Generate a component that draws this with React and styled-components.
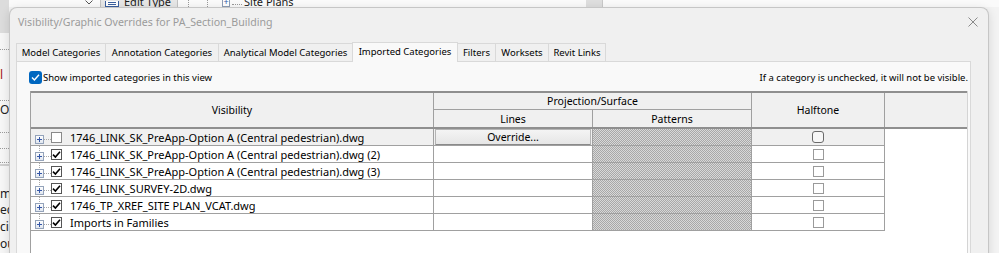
import React from "react";
import styled, { createGlobalStyle } from "styled-components";

const GlobalStyle = createGlobalStyle`
  html, body {
    margin: 0;
    padding: 0;
  }
  body {
    background: #f3f3f3;
    font-family: "Segoe UI", "Noto Sans", "Open Sans", sans-serif;
    color: #000;
  }
`;

const tabs = [
  { label: "Model Categories", width: 90 },
  { label: "Annotation Categories", width: 114 },
  { label: "Analytical Model Categories", width: 135 },
  { label: "Imported Categories", width: 106, active: true },
  { label: "Filters", width: 39 },
  { label: "Worksets", width: 54 },
  { label: "Revit Links", width: 58 },
];

const rows = [
  { name: "1746_LINK_SK_PreApp-Option A (Central pedestrian).dwg", checked: false, current: true },
  { name: "1746_LINK_SK_PreApp-Option A (Central pedestrian).dwg (2)", checked: true },
  { name: "1746_LINK_SK_PreApp-Option A (Central pedestrian).dwg (3)", checked: true },
  { name: "1746_LINK_SURVEY-2D.dwg", checked: true },
  { name: "1746_TP_XREF_SITE PLAN_VCAT.dwg", checked: true },
  { name: "Imports in Families", checked: true },
];

// bits of the Revit window peeking out on the left
const sideItems = [
  { h: 26, grey: true },
  { h: 17, dotted: true },
  { h: 16 },
  { h: 17, text: "l", red: true },
  { h: 18, dotted: true },
  { h: 17, text: "Or" },
  { h: 15, dotted: true },
  { h: 16, dotted: true },
  { h: 14, dotted: true },
  { h: 3, solid: true },
  { h: 19 },
  { h: 17, text: "m" },
  { h: 16, text: "ec" },
  { h: 17, text: "cip" },
  { h: 17, text: "ou" },
];

const Check = ({ color = "#000", width = 1.6 }) => (
  <svg width="11" height="11" viewBox="0 0 11 11">
    <path d="M2 5.6 L4.4 8 L9 2.8" fill="none" stroke={color} strokeWidth={width} />
  </svg>
);

const Expander = ({ first, last }) => (
  <svg width="20" height="16" viewBox="0 0 20 16">
    <defs>
      <linearGradient id="expGrad" x1="0" y1="0" x2="0" y2="1">
        <stop offset="0" stopColor="#ffffff" />
        <stop offset="1" stopColor="#dfe5ee" />
      </linearGradient>
    </defs>
    <line x1="8.5" y1={first ? 10 : 0} x2="8.5" y2={last ? 10 : 16} stroke="#a8a8a8" strokeDasharray="1 1" />
    <line x1="13" y1="10.5" x2="20" y2="10.5" stroke="#a8a8a8" strokeDasharray="1 1" />
    <rect x="4.5" y="6.5" width="8" height="8" fill="url(#expGrad)" stroke="#94a3ba" />
    <path d="M6 10.5h5M8.5 8v5" stroke="#3557a8" />
  </svg>
);

const App = () => (
  <>
    <GlobalStyle />
    <Desktop>
      <Backdrop>
        <TopStrip>
          <StripCorner />
          <Chevron>
            <svg width="8" height="5" viewBox="0 0 8 5">
              <path d="M0.5 0.5 L4 4 L7.5 0.5" fill="none" stroke="#555" />
            </svg>
          </Chevron>
          <EditType>
            <svg width="14" height="6" viewBox="0 0 14 6">
              <rect x="0.5" y="-4.5" width="13" height="10" fill="#fff" stroke="#3b5f9e" />
              <path d="M3 1.5h8M3 3.5h8" stroke="#3b5f9e" />
            </svg>
            <span>Edit Type</span>
          </EditType>
          <DotSep $gap={10} />
          <DotSep $gap={18} />
          <TreeNode>
            <PlusBox>+</PlusBox>
            <TreeDots />
            <span>Site Plans</span>
          </TreeNode>
          <ScrollThumb />
        </TopStrip>
        <SideStrip>
          {sideItems.map((it, i) => (
            <SideItem key={i} $h={it.h} $grey={it.grey} $dotted={it.dotted} $solid={it.solid} $red={it.red}>
              {it.text}
            </SideItem>
          ))}
        </SideStrip>
      </Backdrop>

      <Dialog>
        <TitleBar>
          <Title>Visibility/Graphic Overrides for PA_Section_Building</Title>
          <svg width="10" height="10" viewBox="0 0 10 10">
            <path d="M0.5 0.5 L9.5 9.5 M9.5 0.5 L0.5 9.5" stroke="#8a8a8a" strokeWidth="1" />
          </svg>
        </TitleBar>
        <DialogBody>
          <TabStrip>
            {tabs.map((t) => (
              <Tab key={t.label} $w={t.width} $active={t.active}>
                {t.label}
              </Tab>
            ))}
          </TabStrip>
          <Panel>
            <TopRow>
              <ShowToggle>
                <BlueBox>
                  <Check color="#fff" width={1.4} />
                </BlueBox>
                Show imported categories in this view
              </ShowToggle>
              <Note>If a category is unchecked, it will not be visible.</Note>
            </TopRow>
            <Table>
              <Header>
                <HeadCell $col="1" $row="1 / 3">Visibility</HeadCell>
                <HeadCell $col="2 / 4" $row="1" $split>Projection/Surface</HeadCell>
                <HeadCell $col="2" $row="2">Lines</HeadCell>
                <HeadCell $col="3" $row="2">Patterns</HeadCell>
                <HeadCell $col="4" $row="1 / 3">Halftone</HeadCell>
                <HeadCell $col="5" $row="1 / 3" $last />
              </Header>
              {rows.map((r, i) => (
                <Row key={r.name}>
                  <NameCell $current={r.current}>
                    <Expander first={i === 0} last={i === rows.length - 1} />
                    <VisBox $checked={r.checked}>{r.checked && <Check />}</VisBox>
                    <RowLabel>{r.name}</RowLabel>
                  </NameCell>
                  <Cell $current={r.current}>
                    {r.current && <OverrideButton>Override...</OverrideButton>}
                  </Cell>
                  <PatternCell />
                  <Cell $current={r.current} $center>
                    <HalftoneBox $current={r.current} />
                  </Cell>
                  <Blank />
                </Row>
              ))}
            </Table>
          </Panel>
        </DialogBody>
      </Dialog>
    </Desktop>
  </>
);

const Desktop = styled.div`
  position: relative;
  width: 999px;
  height: 253px;
  overflow: hidden;
  background: #f3f3f3;
`;

const Backdrop = styled.div`
  display: grid;
  grid-template-columns: 9px 1fr;
  grid-template-rows: 7px 1fr;
  height: 100%;
`;

const TopStrip = styled.div`
  grid-column: 1 / -1;
  display: flex;
  align-items: flex-end;
  overflow: hidden;
  background: #fafafa;
  font-size: 11px;
  color: #1a1a1a;
`;

const StripCorner = styled.div`
  width: 9px;
  align-self: stretch;
  background: #dcdcdc;
`;

const Chevron = styled.span`
  display: flex;
  margin-left: 76px;
  margin-bottom: 2px;
`;

const EditType = styled.div`
  display: flex;
  align-items: flex-end;
  gap: 5px;
  box-sizing: border-box;
  width: 78px;
  height: 16px;
  margin-left: 7px;
  padding: 0 0 0 4px;
  background: #e6e6e6;
  border: 1px solid #c2c2c2;
  border-bottom: none;
  line-height: 10px;
  white-space: nowrap;
  svg {
    flex: none;
  }
`;

const DotSep = styled.div`
  width: 0;
  height: 7px;
  margin-left: ${(p) => p.$gap}px;
  border-left: 1px dotted #9a9a9a;
`;

const TreeNode = styled.div`
  display: flex;
  align-items: flex-end;
  margin-left: 14px;
  line-height: 10px;
  white-space: nowrap;
`;

const PlusBox = styled.span`
  box-sizing: border-box;
  width: 8px;
  height: 9px;
  border: 1px solid #8d9db5;
  background: #fff;
  color: #3557a8;
  font-size: 9px;
  line-height: 6px;
  text-align: center;
`;

const TreeDots = styled.span`
  width: 10px;
  margin: 0 2px 2px 2px;
  border-bottom: 1px dotted #9a9a9a;
`;

const ScrollThumb = styled.div`
  align-self: stretch;
  width: 16px;
  margin-left: 292px;
  background: #dedede;
  border-right: 1px solid #c8c8c8;
`;

const SideStrip = styled.div`
  display: flex;
  flex-direction: column;
  overflow: hidden;
  background: #f6f6f6;
  font-size: 12px;
`;

const SideItem = styled.div`
  flex: none;
  box-sizing: border-box;
  height: ${(p) => p.$h}px;
  line-height: ${(p) => p.$h}px;
  white-space: nowrap;
  background: ${(p) => (p.$grey ? "#dcdcdc" : "transparent")};
  color: ${(p) => (p.$red ? "#a31515" : "#222")};
  border-bottom: ${(p) =>
    p.$dotted ? "1px dotted #9c9c9c" : p.$solid ? "2px solid #cfcfcf" : "none"};
`;

const Dialog = styled.section`
  position: absolute;
  left: 9px;
  top: 7px;
  box-sizing: border-box;
  width: 980px;
  height: 262px;
  display: flex;
  flex-direction: column;
  background: #f0f0f0;
  border: 1px solid #c6c6c6;
  border-bottom: none;
  border-radius: 8px 8px 0 0;
  box-shadow: 0 2px 10px rgba(0, 0, 0, 0.12);
`;

const TitleBar = styled.div`
  display: flex;
  align-items: center;
  justify-content: space-between;
  height: 28px;
  padding: 0 10px 0 8px;
`;

const Title = styled.span`
  font-size: 10.6px;
  color: #9b9b9b;
`;

const DialogBody = styled.div`
  flex: 1;
  display: flex;
  flex-direction: column;
  padding: 6px 17px 0 6px;
`;

const TabStrip = styled.div`
  display: flex;
  align-items: flex-end;
  height: 19px;
  position: relative;
  z-index: 1;
`;

const Tab = styled.div`
  box-sizing: border-box;
  width: ${(p) => p.$w}px;
  height: ${(p) => (p.$active ? 20 : 18)}px;
  margin-right: -1px;
  margin-bottom: ${(p) => (p.$active ? -1 : 0)}px;
  padding-top: 2px;
  border: 1px solid #d9d9d9;
  border-bottom: none;
  background: ${(p) => (p.$active ? "#f9f9f9" : "#f0f0f0")};
  position: relative;
  z-index: ${(p) => (p.$active ? 2 : 1)};
  font-size: 9.5px;
  line-height: 14px;
  text-align: center;
  white-space: nowrap;
`;

const Panel = styled.div`
  flex: 1;
  display: flex;
  flex-direction: column;
  background: #f9f9f9;
  border: 1px solid #d9d9d9;
  padding: 7px 2px 0 13px;
`;

const TopRow = styled.div`
  display: flex;
  align-items: center;
  justify-content: space-between;
  height: 16px;
  margin-bottom: 6px;
  font-size: 9.5px;
`;

const ShowToggle = styled.label`
  display: flex;
  align-items: center;
  gap: 1px;
  margin-left: -1px;
`;

const BlueBox = styled.span`
  display: flex;
  align-items: center;
  justify-content: center;
  width: 13px;
  height: 13px;
  border-radius: 3px;
  background: #0067c0;
`;

const Note = styled.span`
  white-space: nowrap;
`;

const Table = styled.div`
  flex: 1;
  background: #fff;
  border-left: 1px solid #a0a0a0;
  border-right: 1px solid #d4d4d4;
  font-size: 10.5px;
`;

const columns = "403px 159px 159px 133px 1fr";

const Header = styled.div`
  display: grid;
  grid-template-columns: ${columns};
  grid-template-rows: 17px 17px;
  background: #f0f0f0;
  border-top: 2px solid #8f8f8f;
  border-bottom: 2px solid #8f8f8f;
`;

const HeadCell = styled.div`
  grid-column: ${(p) => p.$col};
  grid-row: ${(p) => p.$row};
  display: flex;
  align-items: center;
  justify-content: center;
  border-right: ${(p) => (p.$last ? "none" : "1px solid #a0a0a0")};
  border-bottom: ${(p) => (p.$split ? "1px solid #a0a0a0" : "none")};
`;

const Row = styled.div`
  display: grid;
  grid-template-columns: ${columns};
  height: 17px;
`;

const Cell = styled.div`
  display: flex;
  align-items: center;
  justify-content: ${(p) => (p.$center ? "center" : "flex-start")};
  border-right: 1px solid #a0a0a0;
  border-bottom: 1px solid #a0a0a0;
  background: ${(p) => (p.$current ? "#f0f0f0" : "#fff")};
`;

const NameCell = styled(Cell)`
  white-space: nowrap;
  overflow: hidden;
  font-size: 11px;
`;

const PatternCell = styled(Cell)`
  background: repeating-conic-gradient(#a8a8a8 0 25%, #d8d8d8 0 50%) 0 0 / 2px 2px;
`;

const Blank = styled.div`
  background: #fff;
`;

const VisBox = styled.span`
  flex: none;
  display: flex;
  box-sizing: border-box;
  width: 11px;
  height: 11px;
  border: 1px solid ${(p) => (p.$checked ? "#555" : "#8a8a8a")};
  background: #fff;
  svg {
    margin: -1px;
  }
`;

const RowLabel = styled.span`
  margin-left: 8px;
`;

const OverrideButton = styled.button`
  box-sizing: border-box;
  width: 156px;
  height: 16px;
  margin: 0 0 0 1px;
  padding: 0;
  font: inherit;
  font-size: 10.5px;
  color: #000;
  background: linear-gradient(#f4f4f4, #e6e6e6);
  border: 1px solid #b4b4b4;
  border-bottom-color: #8a8a8a;
  border-radius: 1px;
`;

const HalftoneBox = styled.span`
  box-sizing: border-box;
  width: ${(p) => (p.$current ? 12 : 11)}px;
  height: ${(p) => (p.$current ? 12 : 11)}px;
  border: 1px solid ${(p) => (p.$current ? "#6a6a6a" : "#9a9a9a")};
  border-radius: ${(p) => (p.$current ? 3 : 0)}px;
  background: ${(p) => (p.$current ? "#f7f7f7" : "#fff")};
`;

export default App;
